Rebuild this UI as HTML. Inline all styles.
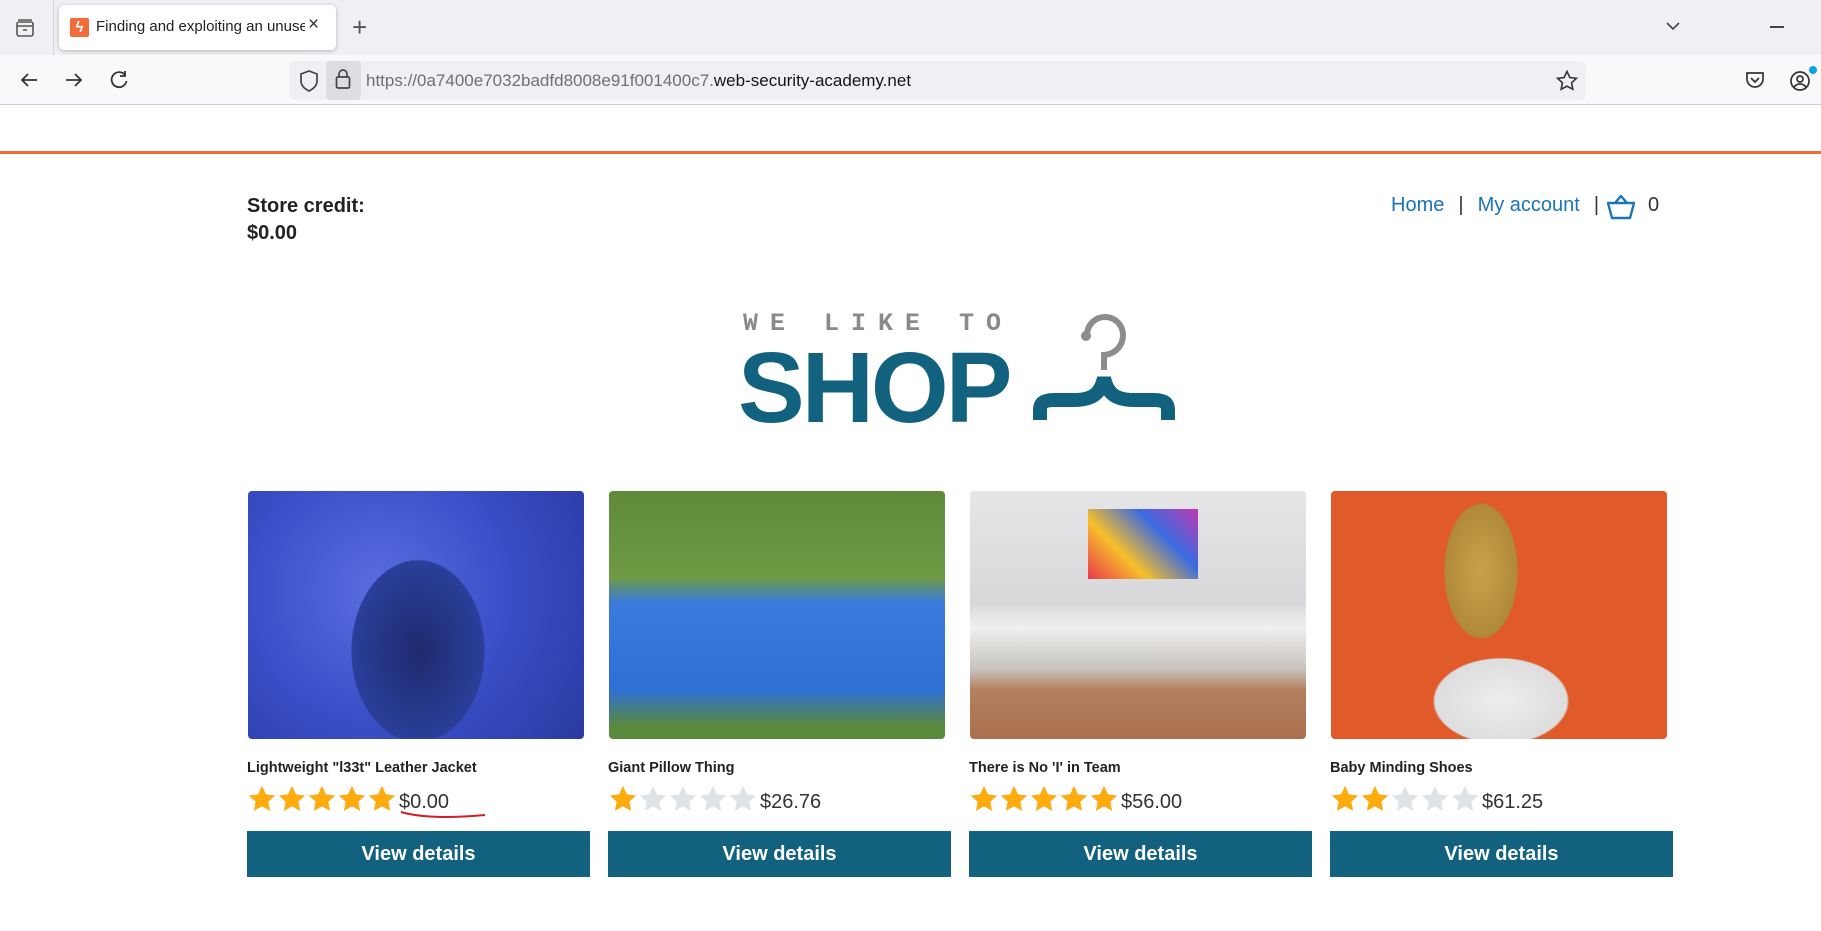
<!DOCTYPE html>
<html><head><meta charset="utf-8"><style>
*{margin:0;padding:0;box-sizing:border-box}
body{width:1821px;height:931px;overflow:hidden;background:#fff;font-family:"Liberation Sans",Arial,sans-serif;position:relative}
.a{position:absolute}
.tabbar{left:0;top:0;width:1821px;height:55px;background:#f0f0f4}
.nav{left:0;top:55px;width:1821px;height:50px;background:#f9f9fb;border-bottom:1px solid #cfcfd8}
.card .img{position:absolute;top:0;left:1px;width:336px;height:248px;border-radius:4px;overflow:hidden}
.card .t{position:absolute;top:269px;left:0;font-weight:bold;font-size:14.5px;color:#222;white-space:nowrap}
.card .s{position:absolute;top:293px;left:0;display:flex;align-items:center;font-size:20px;color:#333}
.star{width:30px;height:30px;display:inline-block}
.card .b{position:absolute;top:340px;left:0;width:343px;height:46px;background:#11617f;color:#fff;font-weight:bold;font-size:20px;text-align:center;line-height:46px}
</style></head><body>
<div class="a tabbar"></div>
<div class="a" style="left:53px;top:0;width:1px;height:55px;background:#d5d5dc"></div>
<svg class="a" style="left:14px;top:17px" width="22" height="22" viewBox="0 0 22 22" fill="none" stroke="#555" stroke-width="1.6"><rect x="3" y="5" width="16" height="14" rx="2"/><path d="M4 3h14M3 9h16M9 13h4"/></svg>
<div class="a" style="left:59px;top:5px;width:277px;height:45px;background:#fff;border-radius:5px;box-shadow:0 1px 4px rgba(0,0,0,.25)"></div>
<div class="a" style="left:70px;top:18px;width:19px;height:19px;background:#f26b3a;border-radius:2px;color:#fff;font-size:15px;font-weight:bold;text-align:center;line-height:19px">ϟ</div>
<div class="a" style="left:96px;top:18px;font-size:15px;color:#222;white-space:nowrap;width:209px;overflow:hidden">Finding and exploiting an unuse</div>
<div class="a" style="left:308px;top:14px;font-size:19px;color:#333">×</div>
<div class="a" style="left:352px;top:12px;font-size:26px;color:#555;font-weight:300">+</div>
<svg class="a" style="left:1665px;top:20px" width="16" height="12" viewBox="0 0 16 12" fill="none" stroke="#444" stroke-width="1.6"><path d="M2 3l6 6 6-6"/></svg>
<div class="a" style="left:1770px;top:26px;width:14px;height:1.5px;background:#444"></div>
<div class="a nav"></div>
<svg class="a" style="left:18px;top:69px" width="22" height="22" viewBox="0 0 22 22" fill="none" stroke="#333" stroke-width="1.8"><path d="M19 11H4M10 5l-6 6 6 6"/></svg>
<svg class="a" style="left:63px;top:69px" width="22" height="22" viewBox="0 0 22 22" fill="none" stroke="#333" stroke-width="1.8"><path d="M3 11h15M12 5l6 6-6 6"/></svg>
<svg class="a" style="left:108px;top:69px" width="22" height="22" viewBox="0 0 22 22" fill="none" stroke="#333" stroke-width="1.8"><path d="M17 6a7.5 7.5 0 1 0 1.5 6"/><path d="M17 2v5h-5"/></svg>
<div class="a" style="left:289px;top:61px;width:1297px;height:39px;background:#f0f0f4;border-radius:5px"></div>
<svg class="a" style="left:298px;top:69px" width="22" height="24" viewBox="0 0 22 24" fill="none" stroke="#444" stroke-width="1.7"><path d="M11 2l8 3v7c0 5-4 8-8 10-4-2-8-5-8-10V5z"/></svg>
<div class="a" style="left:326px;top:61px;width:35px;height:39px;background:#dcdce2;border-radius:4px"></div>
<svg class="a" style="left:333px;top:67px" width="20" height="24" viewBox="0 0 20 24" fill="none" stroke="#444" stroke-width="1.7"><path d="M6 10V7a4 4 0 0 1 8 0v3"/><rect x="3.5" y="10" width="13" height="11" rx="1.5"/></svg>
<div class="a" style="left:366px;top:71px;font-size:17px;color:#6e6e78;white-space:nowrap">https://0a7400e7032badfd8008e91f001400c7.<span style="color:#15141a">web-security-academy.net</span></div>
<svg class="a" style="left:1555px;top:69px" width="24" height="24" viewBox="0 0 24 24" fill="none" stroke="#333" stroke-width="1.6"><path d="M12 2.5l2.9 6 6.5.8-4.8 4.5 1.2 6.5L12 17.2l-5.8 3.1 1.2-6.5L2.6 9.3l6.5-.8z"/></svg>
<svg class="a" style="left:1744px;top:69px" width="22" height="22" viewBox="0 0 22 22" fill="none" stroke="#333" stroke-width="1.7"><path d="M3 4h16v6a8 8 0 0 1-16 0z"/><path d="M7 9l4 4 4-4"/></svg>
<svg class="a" style="left:1789px;top:69px" width="24" height="24" viewBox="0 0 24 24" fill="none" stroke="#333" stroke-width="1.7"><circle cx="11" cy="12" r="9"/><circle cx="11" cy="10" r="3"/><path d="M5 18c3-4 9-4 12 0"/></svg>
<div class="a" style="left:1809px;top:66px;width:8px;height:8px;border-radius:50%;background:#0aa2e8"></div>

<div class="a" style="left:0;top:151px;width:1821px;height:3px;background:#f26b3a"></div>

<div class="a" style="left:247px;top:193px;font-size:20px;font-weight:bold;color:#222;line-height:27px">Store credit:<br>$0.00</div>
<div class="a" style="left:1391px;top:194px;font-size:20px;color:#1a74b8;white-space:nowrap">Home<span style="color:#333;margin:0 14px">|</span>My account<span style="color:#333;margin:0 14px">|</span></div>
<svg class="a" style="left:1606px;top:193px" width="30" height="28" viewBox="0 0 30 28" fill="none" stroke="#1a74b8" stroke-width="2.4" stroke-linejoin="round"><path d="M2 10h26l-4 15H6z"/><path d="M9 10l6-7 6 7"/></svg>
<div class="a" style="left:1648px;top:194px;font-size:20px;color:#333">0</div>

<div class="a" style="left:743px;top:309px;font-family:'Liberation Mono',monospace;font-size:25px;font-weight:bold;letter-spacing:12px;color:#8a8a8a;white-space:nowrap">WE LIKE TO</div>
<div class="a" style="left:738px;top:333px;font-size:100px;font-weight:bold;color:#11617f;letter-spacing:-3px;line-height:1.1">SHOP</div>
<svg class="a" style="left:1025px;top:305px" width="160" height="120" viewBox="1025 305 160 120" fill="none">
<path d="M1104 370v-15c12-1 19-10 19-20a18 18 0 0 0-36 0" stroke="#8c8c8c" stroke-width="6"/>
<circle cx="1086" cy="336" r="5" fill="#8c8c8c"/>
<path d="M1040 420v-10c0-7 4-10 14-10h20c20 0 27-8 30-22 3 14 10 22 30 22h20c10 0 14 3 14 10v10" stroke="#11617f" stroke-width="14"/>
</svg>

<div class="a card" style="left:247px;top:491px;width:345px;height:390px">
 <div class="img" style="background:radial-gradient(ellipse 110px 150px at 170px 160px,#1e2a6e 0%,#2b3f9a 60%,transparent 61%),radial-gradient(circle at 130px 100px,#5a6de0,#3a4fc8 50%,#2a3aa0)"></div>
 <div class="t">Lightweight "l33t" Leather Jacket</div>
 <div class="s"><span class="stars" data-n="5"></span><span style="margin-left:2px">$0.00</span></div>
 <svg class="a" style="left:152px;top:318px" width="90" height="12" viewBox="0 0 90 12"><path d="M2 3c20 6 50 6 84 3" stroke="#d0202a" stroke-width="2" fill="none"/></svg>
 <div class="b">View details</div>
</div>
<div class="a card" style="left:608px;top:491px;width:345px;height:390px">
 <div class="img" style="background:linear-gradient(180deg,#5f8a3a 0%,#6e9a45 35%,#3a7bdc 45%,#2e6fd4 80%,#5a8a3c 95%)"></div>
 <div class="t">Giant Pillow Thing</div>
 <div class="s"><span class="stars" data-n="1"></span><span style="margin-left:2px">$26.76</span></div>
 <div class="b">View details</div>
</div>
<div class="a card" style="left:969px;top:491px;width:345px;height:390px">
 <div class="img" style="background:linear-gradient(180deg,#e6e6e8 0%,#d8d8da 45%,#f0f0f0 55%,#c7c2bc 72%,#b48060 80%,#a8704e 100%)"><div style="position:absolute;left:118px;top:18px;width:110px;height:70px;background:linear-gradient(45deg,#e83a4a,#f6c02a,#3a6ae0,#c03ab0)"></div></div>
 <div class="t">There is No 'I' in Team</div>
 <div class="s"><span class="stars" data-n="5"></span><span style="margin-left:2px">$56.00</span></div>
 <div class="b">View details</div>
</div>
<div class="a card" style="left:1330px;top:491px;width:345px;height:390px">
 <div class="img" style="background:radial-gradient(ellipse 110px 70px at 170px 210px,#eee,#ddd 60%,transparent 62%),radial-gradient(ellipse 60px 110px at 150px 80px,#c8a24a,#b08a38 60%,transparent 62%),#e05a2a"></div>
 <div class="t">Baby Minding Shoes</div>
 <div class="s"><span class="stars" data-n="2"></span><span style="margin-left:2px">$61.25</span></div>
 <div class="b">View details</div>
</div>
<script>
document.querySelectorAll('.stars').forEach(function(s){var n=+s.dataset.n,h='';for(var i=0;i<5;i++){h+='<svg class="star" viewBox="0 0 24 24"><path d="M12 1.5l3.2 6.8 7.3.9-5.4 5 1.4 7.3L12 17.9l-6.5 3.6 1.4-7.3-5.4-5 7.3-.9z" fill="'+(i<n?'#fdab0f':'#dfe3e6')+'"/></svg>';}s.innerHTML=h;});
</script>
</body></html>
